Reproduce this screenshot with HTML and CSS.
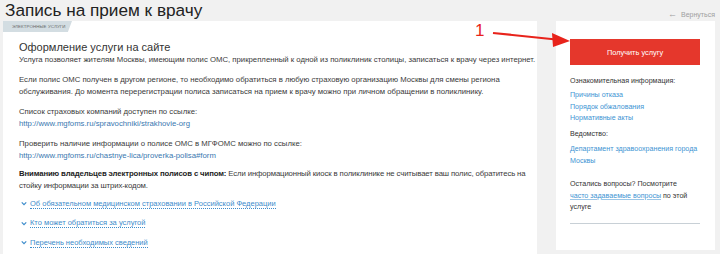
FILE: index.html
```html
<!DOCTYPE html>
<html lang="ru">
<head>
<meta charset="utf-8">
<link rel="stylesheet" href="styles.css">
</head>
<body>
<div class="page">
  <div class="top">
    <h1 class="title">Запись на прием к врачу</h1>
    <a class="back" href="#"><span class="back-arrow">&#8592;</span> Вернуться</a>
  </div>
  <div class="columns">
    <main class="card main">
      <div class="tab">ЭЛЕКТРОННЫЕ УСЛУГИ</div>
      <div class="content">
        <h2 class="subtitle">Оформление услуги на сайте</h2>
        <p>Услуга позволяет жителям Москвы, имеющим полис ОМС, прикрепленный к одной из поликлиник столицы, записаться к врачу через интернет.</p>
        <p>Если полис ОМС получен в другом регионе, то необходимо обратиться в любую страховую организацию Москвы для смены региона<br>обслуживания. До момента перерегистрации полиса записаться на прием к врачу можно при личном обращении в поликлинику.</p>
        <p>Список страховых компаний доступен по ссылке:<br><a class="link" href="#">http://www.mgfoms.ru/spravochniki/strakhovie-org</a></p>
        <p>Проверить наличие информации о полисе ОМС в МГФОМС можно по ссылке:<br><a class="link" href="#">http://www.mgfoms.ru/chastnye-lica/proverka-polisa#form</a></p>
        <p class="last"><b>Вниманию владельцев электронных полисов с чипом:</b> Если информационный киоск в поликлинике не считывает ваш полис, обратитесь на<br>стойку информации за штрих-кодом.</p>
        <ul class="acc">
          <li><svg class="chev" viewBox="0 0 8 6" width="6" height="5"><path d="M1 1.5 L4 4.5 L7 1.5" fill="none" stroke="#3d8ccb" stroke-width="1.6"/></svg><a href="#">Об обязательном медицинском страховании в Российской Федерации</a></li>
          <li><svg class="chev" viewBox="0 0 8 6" width="6" height="5"><path d="M1 1.5 L4 4.5 L7 1.5" fill="none" stroke="#3d8ccb" stroke-width="1.6"/></svg><a href="#">Кто может обратиться за услугой</a></li>
          <li><svg class="chev" viewBox="0 0 8 6" width="6" height="5"><path d="M1 1.5 L4 4.5 L7 1.5" fill="none" stroke="#3d8ccb" stroke-width="1.6"/></svg><a href="#">Перечень необходимых сведений</a></li>
        </ul>
      </div>
    </main>
    <aside class="card side">
      <button class="btn">Получить услугу</button>
      <p class="label first">Ознакомительная информация:</p>
      <ul class="links">
        <li><a href="#">Причины отказа</a></li>
        <li><a href="#">Порядок обжалования</a></li>
        <li><a href="#">Нормативные акты</a></li>
      </ul>
      <p class="label">Ведомство:</p>
      <p class="dept"><a href="#">Департамент здравоохранения города<br>Москвы</a></p>
      <p class="faq">Остались вопросы? Посмотрите<br><a href="#">часто задаваемые вопросы</a> по этой<br>услуге</p>
      <div class="divider"></div>
    </aside>
  </div>
  <svg class="annot" width="110" height="30" viewBox="0 0 110 30">
    <text x="1" y="14" class="annot-num">1</text>
    <path d="M19 11 L82 17.5" stroke="#e8231b" stroke-width="2.2"/>
    <path d="M96 19 L78 11 L79 25 Z" fill="#e8231b"/>
  </svg>
</div>
</body>
</html>
```

FILE: styles.css
```css
* { box-sizing: border-box; }
body {
  margin: 0;
  background: #f1f1f1;
  font-family: "Liberation Sans", Arial, sans-serif;
  color: #333;
  width: 720px;
  height: 254px;
  overflow: hidden;
}
.page {
  position: relative;
  padding: 0 5px 0 3px;
}
.top {
  display: flex;
  justify-content: space-between;
  align-items: flex-end;
  height: 21px;
}
.title {
  margin: 1px 0 0 2px;
  font-weight: normal;
  font-size: 17.2px;
  line-height: 19px;
  color: #222;
  align-self: flex-start;
}
.back {
  font-size: 7px;
  color: #a0a0a0;
  text-decoration: none;
  margin-bottom: 2px;
}
.back-arrow { font-size: 9px; margin-right: 2px; }
.columns {
  display: grid;
  grid-template-columns: 534px 159px;
  column-gap: 19px;
}
.card {
  background: #fff;
}
.main {
  height: 240px;
}
.tab {
  width: 69px;
  height: 11px;
  background: #d3dde2;
  font-size: 4.4px;
  line-height: 11px;
  padding-left: 9px;
  color: #666;
  clip-path: polygon(0 0, 100% 0, 94% 100%, 0 100%);
  letter-spacing: 0.1px;
}
.content {
  padding: 9px 0 0 16px;
}
.subtitle {
  margin: 0;
  font-weight: normal;
  font-size: 11px;
  line-height: 13px;
  color: #333;
}
.content p {
  margin: 0 0 8px;
  font-size: 7.75px;
  line-height: 12px;
  color: #3a3a3a;
  white-space: nowrap;
}
.content p.last {
  margin: -2px 0 0;
  letter-spacing: -0.12px;
}
.content p b { font-weight: bold; color: #222; }
.link { color: #3a78b0; text-decoration: none; }
.acc {
  list-style: none;
  margin: 2px 0 0;
  padding: 0 0 0 2px;
}
.acc li {
  display: flex;
  align-items: center;
  gap: 3px;
  height: 19.5px;
  font-size: 7.5px;
}
.acc a {
  color: #3d8ccb;
  text-decoration: none;
  border-bottom: 1px dotted #3d8ccb;
  line-height: 9px;
}
.side {
  height: 229px;
  padding: 18px 15px 0 14px;
  font-size: 7.1px;
}
.btn {
  display: block;
  width: 130px;
  height: 26px;
  border: 0;
  background: #e5372c;
  color: #fff;
  font-family: "Liberation Sans", Arial, sans-serif;
  font-size: 7.4px;
  padding: 0;
}
.label {
  margin: 3px 0 3px;
  line-height: 12px;
  color: #333;
}
.label.first { margin-top: 10px; }
.links {
  list-style: none;
  margin: 0;
  padding: 0;
}
.links li { line-height: 11.7px; }
.side a { color: #3d94d3; text-decoration: none; }
.dept {
  margin: 3px 0 0;
  line-height: 12px;
}
.faq {
  margin: 12px 0 0;
  line-height: 11.5px;
  color: #333;
}
.faq a { text-decoration: underline; text-decoration-color: #9cc6e6; }
.divider {
  margin-top: 9px;
  height: 1px;
  background: #c8d0d6;
}
.annot {
  position: absolute;
  left: 474px;
  top: 22px;
}
.annot-num {
  font-family: "Liberation Sans", Arial, sans-serif;
  font-size: 17px;
  fill: #e8231b;
}
```
